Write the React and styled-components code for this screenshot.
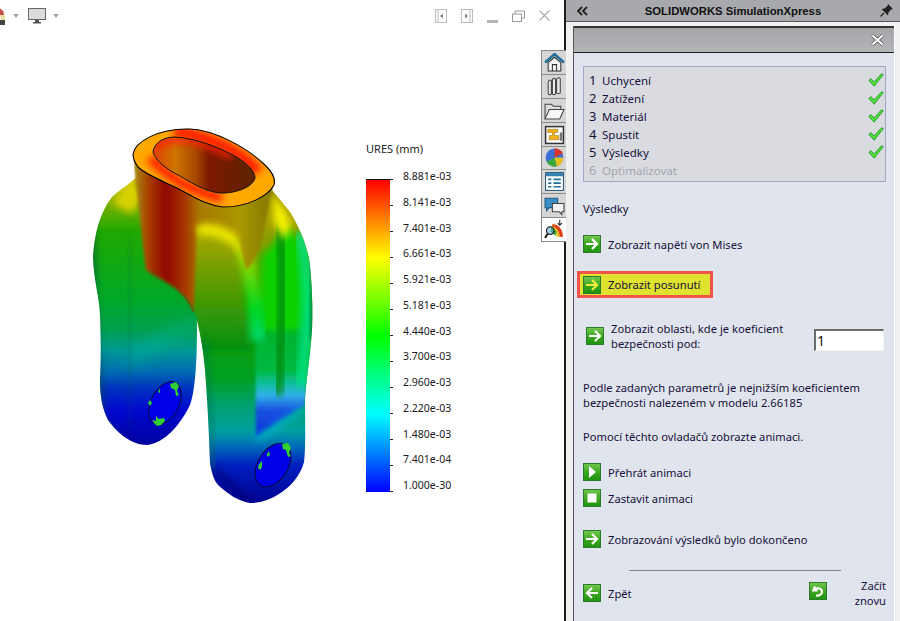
import React from "react";
import styled, { createGlobalStyle } from "styled-components";

const Global = createGlobalStyle`
  html, body { margin: 0; padding: 0; background: #fff; }
  #root { width: 900px; height: 621px; overflow: hidden; }
`;
const Page = styled.div`
  width: 900px; height: 621px; display: flex; position: relative; overflow: hidden;
  font-family: "Noto Sans", "Liberation Sans", sans-serif; color: #17103c;
`;
const Viewport = styled.div`
  position: relative; width: 564px; flex: none; background: #fff; border-right: 2px solid #1c1c1c;
`;
const ViewBar = styled.div`
  height: 31px; display: flex; align-items: center; padding: 0 14px 0 0;
`;
const ViewLeft = styled.div`display: flex; align-items: center; margin-left: -4px;`;
const ViewRight = styled.div`display: flex; align-items: center; margin-left: auto; gap: 14px;`;
const Spacer = styled.span`width: ${p => p.$w}px;`;
const ModelSvg = styled.svg`position: absolute; left: 0; top: 0;`;
const Legend = styled.div`
  position: absolute; left: 366px; top: 142px; width: 100px; font-family: "Noto Sans", sans-serif;
`;
const LegendTitle = styled.div`font-size: 11px; line-height: 14px; color: #222; margin-bottom: 23px;`;
const LegendBody = styled.div`display: flex; height: 314px;`;
const ColorBar = styled.div`
  width: 24px; height: 313px; border-top: 1px solid #111; box-sizing: border-box;
  background: linear-gradient(#ff0000 0%, #ffff00 25%, #00ff00 50%, #00ffff 75%, #0000ff 100%);
`;
const Ticks = styled.div`
  width: 3px; height: 313px; display: flex; flex-direction: column; justify-content: space-between;
`;
const Tick = styled.i`display: block; height: 1px; background: #222;`;
const Labels = styled.div`
  margin: -10px 0 0 10px; height: 323px; display: flex; flex-direction: column; justify-content: space-between;
`;
const LegendLabel = styled.div`font-size: 10.5px; line-height: 14px; color: #1a1a1a; white-space: nowrap;`;

const Panel = styled.div`
  flex: 1; min-width: 0; display: flex; flex-direction: column; background: #f1f1f1;
`;
const TitleBar = styled.div`
  height: 22px; box-sizing: border-box; display: flex; align-items: center; background: #a7a9ac; border-bottom: 1px solid #555; padding: 0 7px 0 11px;
  flex: none;
`;
const TitleText = styled.div`
  flex: 1; text-align: center; font: bold 11.3px "Liberation Sans", sans-serif; color: #111; margin-left: 2px; padding-right: 4px;
`;
const Card = styled.div`
  margin: 4px 5px 0 7px; flex: 1; border-left: 1px solid #555; display: flex; flex-direction: column; background: #e0e4ec; min-height: 0; border-right: 1px solid #fff;
`;
const CardHead = styled.div`
  height: 27px; box-sizing: border-box; flex: none; display: flex; align-items: center; justify-content: flex-end; padding-right: 10px;
  background: linear-gradient(#a4a5a8, #b4b5b8); border-top: 2px solid #333; border-bottom: 1px solid #222;
`;
const CardBody = styled.div`padding: 13px 8px 0 9px; position: relative; flex: 1;`;
const StepBox = styled.div`
  height: 116px; box-sizing: border-box; background: #d9dbe0; border: 1px solid #a2a6c6; padding: 4px 1px 0 5px;
  display: flex; flex-direction: column;
`;
const StepRow = styled.div`
  height: 18px; display: flex; align-items: center; color: ${p => (p.$off ? "#a4a6ac" : "#17103c")};
`;
const StepNum = styled.span`font-size: 13px; width: 13px; flex: none;`;
const StepLabel = styled.span`font-size: 11.5px; flex: 1;`;
const Text = styled.div`font-size: 11.2px; line-height: 15px; margin-top: ${p => p.$mt || 0}px; white-space: nowrap;`;
const ActionRow = styled.div`
  display: flex; align-items: center; gap: 7px; font-size: 11.2px; height: 18px; margin-top: ${p => p.$mt || 0}px;
`;
const Highlight = styled.div`
  display: flex; align-items: center; gap: 7px; width: 136px; height: 27px; box-sizing: border-box; margin: ${p => p.$mt}px 0 0 -6px;
  padding-left: 3px; background: #dfe22f; border: 3px solid #f2534a; font-size: 11.2px;
`;
const MultiRow = styled.div`display: flex; align-items: center; margin: 23px 0 0 3px;`;
const MultiText = styled.div`margin-left: 7px; font-size: 11.2px; line-height: 15px; width: 203px;`;
const NumberBox = styled.div`
  width: 70px; height: 22px; box-sizing: border-box; background: #fff; border: 1px solid; border-color: #6a6a6a #f4f4f4 #f4f4f4 #6a6a6a;
  border-top-width: 2px; border-left-width: 2px; font-size: 14px; line-height: 19px; padding-left: 1px; color: #111;
  align-self: flex-start; margin-top: 8px;
`;
const Divider = styled.div`height: 1px; background: #82848c; margin: 22px 45px 0 46px;`;
const Footer = styled.div`display: flex; align-items: center; margin-top: 5px; height: 34px;`;
const FooterLeft = styled.div`display: flex; align-items: center; gap: 7px; font-size: 11.2px; width: 226px;`;
const Restart = styled.div`flex: none;`;
const RestartLabel = styled.div`flex: 1; text-align: right; font-size: 11.2px; line-height: 15px;`;
const SideTabs = styled.div`
  position: absolute; left: 541px; top: 50px; width: 25px; height: 192px; display: flex; flex-direction: column; border: 1px solid #8a8a8a; border-right: none; box-sizing: border-box;
`;
const SideTab = styled.div`
  flex: 1; display: flex; align-items: center; justify-content: center; background: ${p => (p.$on ? "#fff" : "#d6d6d6")};
  border-top: ${p => (p.$first ? "none" : "1px solid #8a8a8a")};
`;
const IconSvg = styled.svg`flex: none;`;

function GreenIcon({ kind, tone }) {
  const glyph = tone || "#fff";
  const id = "g" + kind + glyph.slice(1);
  return (
    <IconSvg width="18" height="18" viewBox="0 0 18 18">
      <defs>
        <linearGradient id={id} x1="0" y1="0" x2="0" y2="1">
          <stop offset="0" stopColor="#74c850" />
          <stop offset="0.55" stopColor="#3aa41e" />
          <stop offset="1" stopColor="#1f9410" />
        </linearGradient>
      </defs>
      <rect x="0.5" y="0.5" width="17" height="17" fill={`url(#${id})`} stroke="#2c7a2c" />
      {kind === "right" && <path d="M3 9H13.500M9 4 14 9 9 14" fill="none" stroke={glyph} strokeWidth="2.200" />}
      {kind === "left" && <path d="M15 9H4.500M9 4 4 9 9 14" fill="none" stroke={glyph} strokeWidth="2.200" />}
      {kind === "play" && <path d="M6 3 13 9 6 15Z" fill={glyph} />}
      {kind === "stop" && <rect x="4.500" y="4.500" width="9" height="9" fill={glyph} />}
      {kind === "undo" && <path d="M6 4.500 4.500 8.500 8.500 8.500M5.500 7.500C8 5.500 13 6 13 10C13 13 9.500 14 7 13.500" fill="none" stroke={glyph} strokeWidth="2.200" />}
    </IconSvg>
  );
}
const Check = () => (
  <svg width="16" height="14" viewBox="0 0 16 14">
    <path d="M0.800 7.500 3 5.500 6 9 13.500 0.800 15.400 1.600 6.200 13.200Z" fill="#4fe03a" stroke="#1f8a2a" strokeWidth="0.800" />
  </svg>
);
const Caret = () => (
  <svg width="8" height="4" viewBox="0 0 8 4"><path d="M1 0H7L4 4Z" fill="#a2a2a2" /></svg>
);

const TabIcon = ({ i }) => {
  const p = { width: 21, height: 21, viewBox: "0 0 20 20" };
  if (i === 0) return <svg {...p}><path d="M1 10 10 2 19 10" fill="none" stroke="#1f6f9a" strokeWidth="2.400" /><path d="M4 10V18H16V10L10 5Z" fill="#f4f4f4" stroke="#333" /><path d="M8 18V12H12V18" fill="none" stroke="#333" /></svg>;
  if (i === 1) return <svg {...p}><path d="M4 6 C4 4 7 3 7 5 V17 C7 18 4 18 4 17ZM8 4 C8 2 11 1.500 11 3.500 V17 C11 18 8 18 8 17ZM12 3.500 C12 1.500 15.500 1 15.500 3 V16 C15.500 17 12 17 12 16Z" fill="#e8e8e8" stroke="#444" /></svg>;
  if (i === 2) return <svg {...p}><path d="M1 18V4H7L9 6H16V9" fill="#ddd" stroke="#444" /><path d="M1 18 5 9H19L15 18Z" fill="#f6f6f6" stroke="#444" /></svg>;
  if (i === 3) return <svg {...p}><rect x="1.500" y="2.500" width="17" height="16" fill="#fff" stroke="#333" strokeWidth="1.400" /><path d="M3.500 5H13V8H10V11H14V15H5V11H8V8H3.500Z" fill="#f0b418" stroke="#8a6a10" strokeWidth="0.500" /><rect x="15" y="8" width="2.500" height="8" fill="#777" /></svg>;
  if (i === 4) return <svg {...p}><circle cx="10" cy="10" r="8.500" fill="#3b6fd8" /><path d="M10 10 18 6A8.500 8.500 0 0 0 10 1.500Z" fill="#d8352a" /><path d="M10 10 18.500 10A8.500 8.500 0 0 1 12 18.500Z" fill="#e8c020" /><path d="M10 10 12 18.500A8.500 8.500 0 0 1 2.500 14Z" fill="#3aa83a" /></svg>;
  if (i === 5) return <svg {...p}><rect x="1.500" y="1.500" width="17" height="17" fill="#fff" stroke="#2a5a7a" /><rect x="2" y="2" width="16" height="3" fill="#2f7fb0" /><path d="M4 8H7M9 8H16M4 11.500H7M9 11.500H16M4 15H7M9 15H16" stroke="#1f6f9a" strokeWidth="1.600" /></svg>;
  if (i === 6) return <svg {...p}><path d="M1 3H13V12H5L2.500 15V12H1Z" fill="#3a8ec4" stroke="#1f5a80" /><path d="M8 8H19V16H17V18.500L14.500 16H8Z" fill="#f2f2f2" stroke="#444" /></svg>;
  return <svg {...p}><path d="M8 5C13 5 18 9 18 17H12C12 14 10 11 7 11Z" fill="#e8c020" /><path d="M8 5C13 5 18 9 18 17H15C15 12 12 8 8 7Z" fill="#e03a20" /><path d="M7 8 12 12 11 16 6 12Z" fill="#30a840" /><circle cx="6" cy="11" r="3.600" fill="#5ab0e8" fillOpacity="0.500" stroke="#222" strokeWidth="1.200" /><path d="M3.500 14 1 18" stroke="#222" strokeWidth="2" /><path d="M15 1V6M13 4 15 6 17 4" fill="none" stroke="#222" /></svg>;
};

const RING = "M133 154 C135 142 158 128 190 129 C215 130 248 148 266 166 C272 172 276 178 274 185 C268 196 248 207 223 207 C205 205 192 196 177 188 C160 180 145 174 138 167 C135 163 133 159 133 154Z";
const HOLE = "M153 152 C154 143 163 137 175 137 C195 138 222 148 238 158 C248 164 255 172 255 178 C253 186 240 192 225 193 C210 194 195 185 180 176 C168 170 156 162 153 152Z";
const NECK = "M133 155 L135 180 C140 210 142 245 146 270 C156 278 172 284 180 292 C187 298 191 305 194 312 L197 226 L238 238 L246 270 C256 262 262 245 265 225 L274 184 L200 150Z";
const LLEG = "M135 178 C130 184 122 188 112 197 C100 212 94 235 93 258 C94 282 99 295 100 315 C101 340 101 360 100 380 C100 395 102 408 108 420 C118 434 132 445 147 445 C165 443 180 425 190 405 C196 390 197 350 197 330 C197 318 197 310 196 298 L176 200Z";
const RLEG = "M190 295 C198 320 203 345 205 370 C207 395 209 430 210 463 C212 474 214 480 218 485 C228 494 238 501 250 503 C260 503 270 500 279 494 C290 487 300 477 304 462 C306 445 305 420 305 400 C306 380 310 360 312 330 C313 310 312 280 309 258 C305 240 298 225 290 212 L272 190 L190 215Z";

const Model = () => (
  <ModelSvg width="564" height="621" viewBox="0 0 564 621">
    <defs>
      <filter id="b1" x="-30%" y="-30%" width="160%" height="160%"><feGaussianBlur stdDeviation="1.5" /></filter>
      <filter id="b3" x="-40%" y="-40%" width="180%" height="180%"><feGaussianBlur stdDeviation="3.5" /></filter>
      <filter id="b6" x="-60%" y="-60%" width="220%" height="220%"><feGaussianBlur stdDeviation="7" /></filter>
      <linearGradient id="legL" gradientUnits="userSpaceOnUse" x1="0" y1="180" x2="0" y2="448">
        <stop offset="0" stopColor="#d8c800" /><stop offset="0.08" stopColor="#80b000" />
        <stop offset="0.19" stopColor="#20a800" /><stop offset="0.45" stopColor="#00a828" />
        <stop offset="0.56" stopColor="#00a050" /><stop offset="0.63" stopColor="#009a90" />
        <stop offset="0.71" stopColor="#0070b0" /><stop offset="0.78" stopColor="#0030c0" />
        <stop offset="0.86" stopColor="#0008d0" /><stop offset="1" stopColor="#000098" />
      </linearGradient>
      <linearGradient id="legR" gradientUnits="userSpaceOnUse" x1="0" y1="220" x2="0" y2="505">
        <stop offset="0" stopColor="#a8a000" /><stop offset="0.28" stopColor="#20a000" />
        <stop offset="0.55" stopColor="#00a020" /><stop offset="0.65" stopColor="#00a070" />
        <stop offset="0.74" stopColor="#00a0a0" /><stop offset="0.79" stopColor="#0070b8" />
        <stop offset="0.86" stopColor="#0020c0" /><stop offset="1" stopColor="#000090" />
      </linearGradient>
      <linearGradient id="pocket" gradientUnits="userSpaceOnUse" x1="0" y1="300" x2="0" y2="440">
        <stop offset="0" stopColor="#00b020" /><stop offset="0.5" stopColor="#00b840" />
        <stop offset="0.6" stopColor="#10c0a0" /><stop offset="0.68" stopColor="#30b0e8" />
        <stop offset="0.79" stopColor="#1850e0" /><stop offset="1" stopColor="#0830d8" />
      </linearGradient>
      <linearGradient id="rib" gradientUnits="userSpaceOnUse" x1="0" y1="240" x2="0" y2="345">
        <stop offset="0" stopColor="#e8e800" /><stop offset="0.25" stopColor="#80d800" />
        <stop offset="0.65" stopColor="#00d820" /><stop offset="1" stopColor="#00d880" />
      </linearGradient>
      <linearGradient id="ribFace" gradientUnits="userSpaceOnUse" x1="0" y1="225" x2="0" y2="350">
        <stop offset="0" stopColor="#b8a800" /><stop offset="0.45" stopColor="#609c00" /><stop offset="1" stopColor="#009010" />
      </linearGradient>
      <linearGradient id="neck" gradientUnits="userSpaceOnUse" x1="135" y1="0" x2="275" y2="0">
        <stop offset="0" stopColor="#a88810" /><stop offset="0.1" stopColor="#a83c00" />
        <stop offset="0.22" stopColor="#900600" /><stop offset="0.36" stopColor="#a83800" />
        <stop offset="0.46" stopColor="#a87800" /><stop offset="0.75" stopColor="#a89800" /><stop offset="1" stopColor="#807400" />
      </linearGradient>
      <linearGradient id="holeIn" gradientUnits="userSpaceOnUse" x1="153" y1="0" x2="255" y2="0">
        <stop offset="0" stopColor="#e04000" /><stop offset="0.22" stopColor="#cc7400" />
        <stop offset="0.42" stopColor="#a84800" /><stop offset="0.55" stopColor="#7c1800" /><stop offset="1" stopColor="#5e2400" />
      </linearGradient>
      <clipPath id="ringClip"><path d={RING} /></clipPath>
      <clipPath id="rClip"><path d={RLEG} /></clipPath>
      <clipPath id="lClip"><path d={LLEG} /></clipPath>
      <clipPath id="holeClip"><path d={HOLE} /></clipPath>
      <clipPath id="allClip"><path d={LLEG} /><path d={RLEG} /><path d={NECK} /></clipPath>
    </defs>

    <path d={LLEG} fill="url(#legL)" />
    <g clipPath="url(#lClip)">
      <path d="M90 215 C90 300 98 380 100 420 L122 447" stroke="#004a48" strokeWidth="10" fill="none" opacity="0.6" filter="url(#b3)" />
      <path d="M131 235 C128 290 128 350 131 430" stroke="#005a40" strokeWidth="7" fill="none" opacity="0.22" filter="url(#b6)" />
      <path d="M130 362 C150 345 170 335 196 322" stroke="#00c098" strokeWidth="12" fill="none" opacity="0.4" filter="url(#b6)" />
      <path d="M197 300 L197 400" stroke="#002080" strokeWidth="5" fill="none" opacity="0.35" filter="url(#b3)" />
      <path d="M128 182 C122 190 116 196 113 204 L132 214 L146 192Z" fill="#e0d400" opacity="0.9" filter="url(#b3)" />
    </g>

    <path d={RLEG} fill="url(#legR)" />
    <g clipPath="url(#rClip)">
      <path d="M255 300 L256 437 L305 405 L312 300Z" fill="url(#pocket)" filter="url(#b1)" />
      <path d="M262 255 C272 250 280 235 283 222 L300 240 L314 300 L300 330 L258 330Z" fill="#10d000" filter="url(#b3)" />
      <path d="M279 225 C284 260 283 320 278 395" stroke="#008a10" strokeWidth="10" fill="none" opacity="0.85" filter="url(#b3)" />
      <path d="M300 232 C310 270 310 320 301 385" stroke="#00e080" strokeWidth="13" fill="none" opacity="0.85" filter="url(#b3)" />
      <path d="M312 260 L310 340" stroke="#008060" strokeWidth="4" fill="none" opacity="0.6" filter="url(#b1)" />
      <path d="M186 225 L237 238 L252 352 L200 352Z" fill="url(#ribFace)" filter="url(#b3)" />
      <path d="M240 240 C250 268 256 300 258 340" stroke="url(#rib)" strokeWidth="15" fill="none" filter="url(#b3)" />
      <path d="M203 340 C208 380 210 430 212 470" stroke="#007050" strokeWidth="8" fill="none" opacity="0.45" filter="url(#b3)" />
      <path d="M213 470 L250 503" stroke="#000070" strokeWidth="10" opacity="0.5" filter="url(#b3)" />
      <path d="M256 440 L303 409" stroke="#00b0d0" strokeWidth="7" fill="none" opacity="0.7" filter="url(#b3)" />
    </g>

    <g clipPath="url(#allClip)">
      <path d={NECK} fill="url(#neck)" filter="url(#b1)" />
      <path d="M197 226 C208 220 226 226 238 236 L236 250 C228 240 210 234 199 236Z" fill="#e8e400" filter="url(#b3)" />
      <path d="M273 196 C282 205 288 214 291 226 L284 240 L274 222Z" fill="#f4f000" filter="url(#b3)" />
      <path d="M150 270 C160 278 172 284 180 292 C187 298 191 305 194 312" stroke="#6a5000" strokeWidth="2" fill="none" opacity="0.7" />
    </g>

    <path d={RING} fill="#ffa800" />
    <g clipPath="url(#ringClip)">
      <path d="M174 132 C205 135 240 150 258 172" stroke="#ff1c00" strokeWidth="12" fill="none" filter="url(#b3)" />
      <path d="M150 158 C165 174 190 192 222 198" stroke="#ff1c00" strokeWidth="9" fill="none" filter="url(#b3)" />
    </g>
    <path d={HOLE} fill="url(#holeIn)" />
    <g clipPath="url(#holeClip)">
      <path d="M155 146 C175 134 200 140 232 156" stroke="#ff2000" strokeWidth="6" fill="none" filter="url(#b3)" />
    </g>
    <path d={HOLE} fill="none" stroke="#111" strokeWidth="1" />
    <path d={RING} fill="none" stroke="#000" strokeWidth="1.100" />

    <ellipse cx="165" cy="403" rx="14" ry="23" transform="rotate(27 165 403)" fill="#0000e8" stroke="#0a0a30" strokeWidth="0.900" />
    <path d="M170 384 176 382 179 386 177 391 179 395 176 396 175 390 171 388ZM150 400 152 403 150 406 148 403ZM152 420 156 421 156 416 159 419 164 418 165 421 161 425 157 426 154 423ZM158 392 160 388 160 393Z" fill="#30d030" />
    <ellipse cx="273" cy="465" rx="15" ry="24" transform="rotate(32 273 465)" fill="#0000e8" stroke="#0a0a30" strokeWidth="0.900" />
    <path d="M282 444 288 443 291 448 289 453 291 456 288 457 286 450 283 449ZM267 454 269 451 270 455 267 457ZM259 464 262 461 262 467 260 470 258 468Z" fill="#30d030" />
  </ModelSvg>
);

const labels = ["8.881e-03","8.141e-03","7.401e-03","6.661e-03","5.921e-03","5.181e-03","4.440e-03","3.700e-03","2.960e-03","2.220e-03","1.480e-03","7.401e-04","1.000e-30"];

export default function App() {
  return (
    <Page>
      <Global />
      <Viewport>
        <Model />
        <ViewBar>
          <ViewLeft>
            <svg width="10" height="18" viewBox="0 0 10 18"><path d="M0 1C5 1 8 3 8 8H0Z" fill="#c8504a" /><rect x="0" y="8" width="9" height="9" fill="#e8dfa0" /><rect x="0" y="13" width="9" height="5" fill="#444" /><rect x="2" y="10" width="3" height="3" fill="#fff" /></svg>
            <Spacer $w={6} />
            <Caret />
            <Spacer $w={8} />
            <svg width="18" height="16" viewBox="0 0 18 16"><rect x="0.500" y="0.500" width="17" height="11" fill="#dcdcdc" stroke="#666" /><path d="M7 12H11V14H13V15.500H5V14H7Z" fill="#555" /></svg>
            <Spacer $w={6} />
            <Caret />
          </ViewLeft>
          <ViewRight>
            <svg width="12" height="14" viewBox="0 0 12 14"><rect x="0.500" y="0.500" width="11" height="13" fill="none" stroke="#bbb" /><path d="M3 1V13" stroke="#bbb" /><path d="M8 4.500 5 7 8 9.500Z" fill="#888" /></svg>
            <svg width="12" height="14" viewBox="0 0 12 14"><rect x="0.500" y="0.500" width="11" height="13" fill="none" stroke="#bbb" /><path d="M9 1V13" stroke="#bbb" /><path d="M4 4.500 7 7 4 9.500Z" fill="#888" /></svg>
            <svg width="11" height="14" viewBox="0 0 11 14"><rect x="0" y="11" width="11" height="3" fill="#b4b4b4" /></svg>
            <svg width="13" height="12" viewBox="0 0 13 12"><rect x="0.500" y="4" width="9" height="7.500" fill="#fff" stroke="#999" /><path d="M3 4V1H12.500V8H9.500" fill="none" stroke="#999" /></svg>
            <svg width="11" height="11" viewBox="0 0 11 11"><path d="M0.500 0.500 10.500 10.500M10.500 0.500 0.500 10.500" stroke="#aaa" strokeWidth="1.100" /></svg>
          </ViewRight>
        </ViewBar>
        <Legend>
          <LegendTitle>URES (mm)</LegendTitle>
          <LegendBody>
            <ColorBar />
            <Ticks>{labels.map(l => <Tick key={l} />)}</Ticks>
            <Labels>{labels.map(l => <LegendLabel key={l}>{l}</LegendLabel>)}</Labels>
          </LegendBody>
        </Legend>
      </Viewport>
      <Panel>
        <TitleBar>
          <svg width="11" height="10" viewBox="0 0 11 10"><path d="M5 1 1 5 5 9M10 1 6 5 10 9" fill="none" stroke="#222" strokeWidth="1.800" /></svg>
          <TitleText>SOLIDWORKS SimulationXpress</TitleText>
          <svg width="13" height="13" viewBox="0 0 13 13"><path d="M8 0 13 5 11 5.500 8.500 8.500 8 11.500 1.500 5 4.500 4.500 7.500 2Z" fill="#222" /><path d="M4 9 0.500 12.500" stroke="#222" strokeWidth="1.200" /></svg>
        </TitleBar>
        <Card>
          <CardHead>
            <svg width="13" height="12" viewBox="0 0 13 12"><path d="M1.500 1.500 11.500 10.500M11.500 1.500 1.500 10.500" stroke="#444" strokeWidth="3.400" /><path d="M1.500 1.500 11.500 10.500M11.500 1.500 1.500 10.500" stroke="#fff" strokeWidth="2.200" /></svg>
          </CardHead>
          <CardBody>
            <StepBox>
              {["Uchycení","Zatížení","Materiál","Spustit","Výsledky"].map((s, i) => (
                <StepRow key={s}><StepNum>{i + 1}</StepNum><StepLabel>{s}</StepLabel><Check /></StepRow>
              ))}
              <StepRow $off><StepNum>6</StepNum><StepLabel>Optimalizovat</StepLabel></StepRow>
            </StepBox>
            <Text $mt={19}>Výsledky</Text>
            <ActionRow $mt={19}><GreenIcon kind="right" /><span>Zobrazit napětí von Mises</span></ActionRow>
            <Highlight $mt={18}><GreenIcon kind="right" tone="#f0f040" /><span>Zobrazit posunutí</span></Highlight>
            <MultiRow>
              <GreenIcon kind="right" />
              <MultiText>Zobrazit oblasti, kde je koeficient<br />bezpečnosti pod:</MultiText>
              <NumberBox>1</NumberBox>
            </MultiRow>
            <Text $mt={29}>Podle zadaných parametrů je nejnižším koeficientem<br />bezpečnosti nalezeném v modelu 2.66185</Text>
            <Text $mt={19}>Pomocí těchto ovladačů zobrazte animaci.</Text>
            <ActionRow $mt={19}><GreenIcon kind="play" /><span>Přehrát animaci</span></ActionRow>
            <ActionRow $mt={8}><GreenIcon kind="stop" /><span>Zastavit animaci</span></ActionRow>
            <ActionRow $mt={23}><GreenIcon kind="right" /><span>Zobrazování výsledků bylo dokončeno</span></ActionRow>
            <Divider />
            <Footer>
              <FooterLeft><GreenIcon kind="left" /><span>Zpět</span></FooterLeft>
              <Restart><GreenIcon kind="undo" /></Restart>
              <RestartLabel>Začít<br />znovu</RestartLabel>
            </Footer>
          </CardBody>
        </Card>
      </Panel>
      <SideTabs>
        {[0,1,2,3,4,5,6,7].map(i => (
          <SideTab key={i} $first={i === 0} $on={i === 7}><TabIcon i={i} /></SideTab>
        ))}
      </SideTabs>
    </Page>
  );
}
